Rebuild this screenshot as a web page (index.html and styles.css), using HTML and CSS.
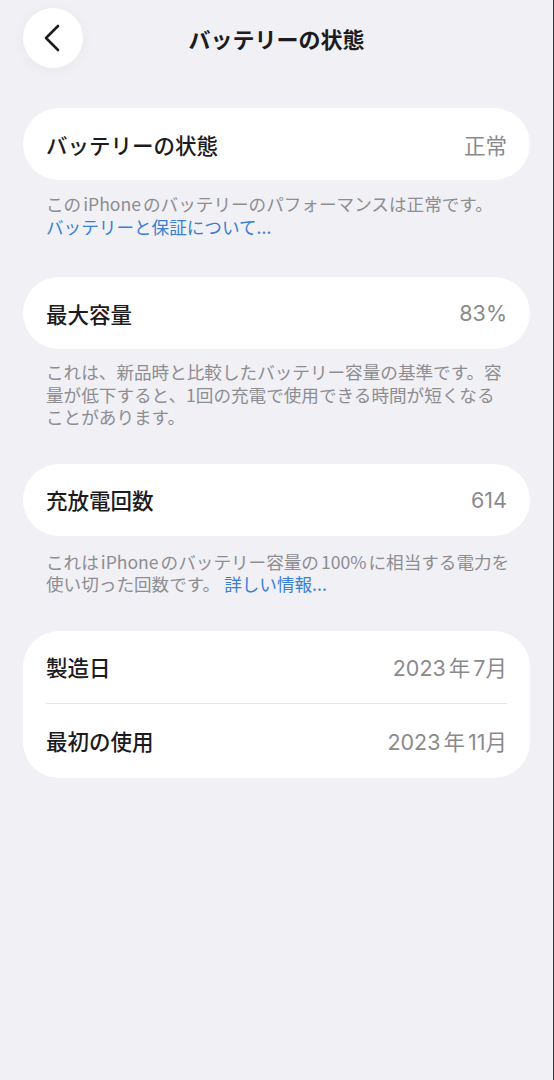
FILE: index.html
```html
<!DOCTYPE html>
<html lang="ja">
<head>
  <meta charset="UTF-8">
  <meta name="viewport" content="width=device-width, initial-scale=1.0">
  <title>バッテリーの状態</title>
  <link rel="stylesheet" href="styles.css">
</head>
<body>
  <div class="screen">
    <header class="nav">
      <button class="back" aria-label="戻る">
        <svg width="18" height="28" viewBox="0 0 18 28">
          <path d="M15 2 L3 14 L15 26" fill="none" stroke="#1c1c1e" stroke-width="2.6" stroke-linecap="round" stroke-linejoin="round"/>
        </svg>
      </button>
      <h1 class="title">バッテリーの状態</h1>
      <div></div>
    </header>

    <main class="content">
      <section class="group">
        <div class="card">
          <div class="row">
            <span class="label">バッテリーの状態</span>
            <span class="value">正常</span>
          </div>
        </div>
        <p class="note">この<span class="latin">iPhone</span>のバッテリーのパフォーマンスは正常です。<br><a href="#">バッテリーと保証について...</a></p>
      </section>

      <section class="group">
        <div class="card">
          <div class="row">
            <span class="label">最大容量</span>
            <span class="value">83%</span>
          </div>
        </div>
        <p class="note">これは、新品時と比較したバッテリー容量の基準です。容<br>量が低下すると、1回の充電で使用できる時間が短くなる<br>ことがあります。</p>
      </section>

      <section class="group">
        <div class="card">
          <div class="row">
            <span class="label">充放電回数</span>
            <span class="value">614</span>
          </div>
        </div>
        <p class="note note-loose">これは<span class="latin">iPhone</span>のバッテリー容量の<span class="latin">100%</span>に相当する電力を<br>使い切った回数です。 <a href="#">詳しい情報...</a></p>
      </section>

      <section class="group">
        <div class="card">
          <div class="row">
            <span class="label">製造日</span>
            <span class="value">2023<span class="unit">年</span>7月</span>
          </div>
          <div class="row">
            <span class="label">最初の使用</span>
            <span class="value">2023<span class="unit">年</span>11月</span>
          </div>
        </div>
      </section>
    </main>
  </div>
</body>
</html>
```

FILE: styles.css
```css
/* General */
body {
  margin: 0;
  background: #f0f0f5;
  font-family: "Noto Sans CJK JP", "Noto Sans", sans-serif;
  color: #1c1c1e;
}

.screen {
  min-height: 100vh;
  box-sizing: border-box;
  border-right: 1px solid #3a3a3c;
}

/* Navigation bar */
.nav {
  display: grid;
  grid-template-columns: 60px 1fr 60px;
  align-items: center;
  padding: 8px 23px 8px;
}

.back {
  width: 60px;
  height: 60px;
  border: none;
  border-radius: 50%;
  background: #fff;
  box-shadow: 0 2px 14px rgba(0, 0, 0, 0.04);
  display: flex;
  justify-content: center;
  align-items: center;
  padding: 0 2px 0 0;
  cursor: pointer;
}

.title {
  margin: 0;
  text-align: center;
  font-size: 22px;
  font-weight: 700;
}

/* Groups */
.content {
  padding: 32px 23px 0;
}

.group {
  margin-bottom: 35px;
}

.group:first-child {
  margin-bottom: 39px;
}

.card {
  background: #fff;
  border-radius: 36px;
  padding: 0 23px;
}

.row {
  height: 72px;
  display: flex;
  justify-content: space-between;
  align-items: center;
}

.row + .row {
  border-top: 1px solid #e6e6ea;
  height: 74px;
}

.label {
  font-size: 21.5px;
  font-weight: 500;
}

.value {
  font-family: Inter, "Noto Sans CJK JP", sans-serif;
  font-size: 21.5px;
  color: #8a8a8e;
}

.unit {
  font-family: "Noto Sans CJK JP", sans-serif;
  margin: 0 3px;
}

/* Footnotes */
.note {
  margin: 0;
  padding: 12px 8px 0 23px;
  font-size: 17.6px;
  line-height: 22.5px;
  color: #8d8d92;
}

.group:first-child .note {
  padding-top: 13px;
}

.note-loose {
  padding-top: 15px;
}

.latin {
  margin: 0 2px;
}

.note a {
  color: #3a7fd4;
  text-decoration: none;
}
```
